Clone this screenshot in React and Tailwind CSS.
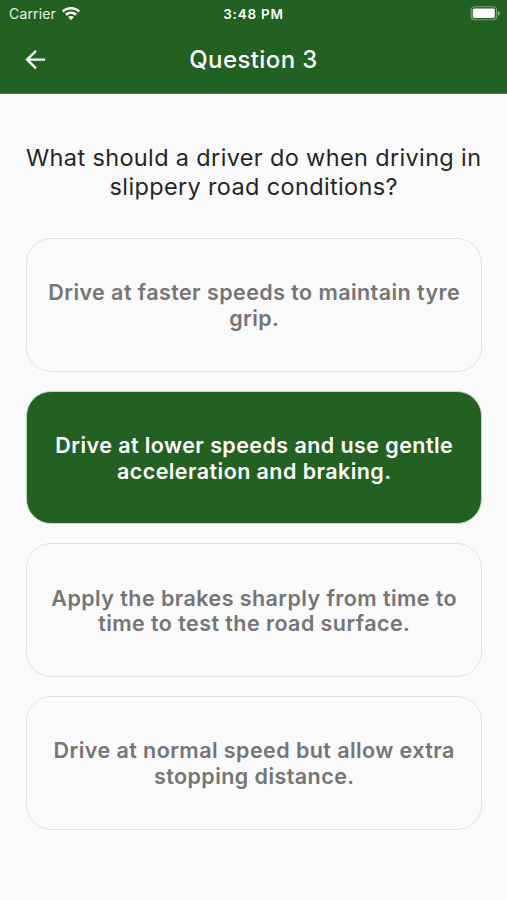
import React, { useState } from 'react';

const OPTIONS = [
  { id: 1, lines: ['Drive at faster speeds to maintain tyre', 'grip.'] },
  { id: 2, lines: ['Drive at lower speeds and use gentle', 'acceleration and braking.'] },
  { id: 3, lines: ['Apply the brakes sharply from time to', 'time to test the road surface.'] },
  { id: 4, lines: ['Drive at normal speed but allow extra', 'stopping distance.'] },
];

const WifiIcon = () => (
  <svg width="18" height="14" viewBox="0 0 18 14" fill="#fff">
    <path d="M9 0C5.5 0 2.4 1.3 0 3.5L1.7 5.4C3.6 3.6 6.1 2.6 9 2.6s5.4 1 7.3 2.8L18 3.5C15.6 1.3 12.5 0 9 0Z" />
    <path d="M9 4.5c-2.3 0-4.3.9-5.9 2.3l1.8 1.9C6 7.700 7.400 7.100 9 7.100s3 .6 4.100 1.600l1.800-1.900C13.300 5.400 11.300 4.500 9 4.500Z" />
    <path d="M9 9c-1.100 0-2.100.4-2.800 1.100L9 13.300l2.800-3.200C11.100 9.400 10.100 9 9 9Z" />
  </svg>
);

const BatteryIcon = () => (
  <svg width="31" height="15" viewBox="0 0 31 15">
    <rect x="1.1" y="0.75" width="25.5" height="13" rx="3.5" fill="none" stroke="#fff" strokeOpacity="0.4" strokeWidth="1.2" />
    <rect x="2.8" y="2.5" width="22" height="9.5" rx="1.5" fill="#fff" />
    <path d="M28 4.8v4.9c1.1-.4 1.8-1.3 1.8-2.45S29.100 5.200 28 4.800Z" fill="#fff" fillOpacity="0.5" />
  </svg>
);

const BackIcon = () => (
  <svg width="20" height="20" viewBox="0 0 20 20" fill="none" stroke="#fff" strokeWidth="2.4">
    <path d="M20 9.600H2.200M11 0.900L2.100 9.600l8.900 8.700" />
  </svg>
);

const StatusBar = () => (
  <div className="grid grid-cols-3 items-center h-[27px] px-[6px] text-white">
    <div className="flex items-center gap-[6px] pl-[3px]">
      <span className="text-[14px] tracking-[0.15px] text-white/90">Carrier</span>
      <WifiIcon />
    </div>
    <span className="pt-px text-center text-[13.5px] font-semibold tracking-[0.8px]">3:48 PM</span>
    <div className="flex justify-end">
      <BatteryIcon />
    </div>
  </div>
);

const Option = ({ lines, selected, onSelect }) => (
  <button
    onClick={onSelect}
    className={`flex h-[133.7px] w-full flex-col items-center justify-center rounded-[25px] border pt-[2px] pl-px text-[21.5px] leading-[25.6px] font-semibold tracking-[0.43px] whitespace-nowrap ${
      selected ? 'bg-[#236122] border-[#c5d3c5] text-white' : 'border-[#e0e0e0] text-[#757575]'
    }`}
  >
    {lines.map((line) => (
      <span key={line}>{line}</span>
    ))}
  </button>
);

const App = () => {
  const [selected, setSelected] = useState(2);

  return (
    <div className="min-h-screen bg-[#fafafa] font-['Inter',sans-serif]">
      <header className="h-[94px] border-b border-[#4a7e49] bg-[#236122]">
        <StatusBar />
        <div className="grid grid-cols-[60px_1fr_60px] items-center h-[66px] text-white">
          <button className="pl-[25px]">
            <BackIcon />
          </button>
          <h1 className="text-center text-[24px] font-medium tracking-[0.4px]">Question 3</h1>
        </div>
      </header>

      <main className="pl-[26px] pr-[25.5px] pt-[49px]">
        <h2 className="text-center text-[23.5px] leading-[29px] tracking-[0.35px] text-[#262626] whitespace-nowrap">
          What should a driver do when driving in
          <br />
          slippery road conditions?
        </h2>
        <div className="mt-[37px] flex flex-col gap-[19px]">
          {OPTIONS.map((option) => (
            <Option
              key={option.id}
              lines={option.lines}
              selected={option.id === selected}
              onSelect={() => setSelected(option.id)}
            />
          ))}
        </div>
      </main>
    </div>
  );
};

export default App;
